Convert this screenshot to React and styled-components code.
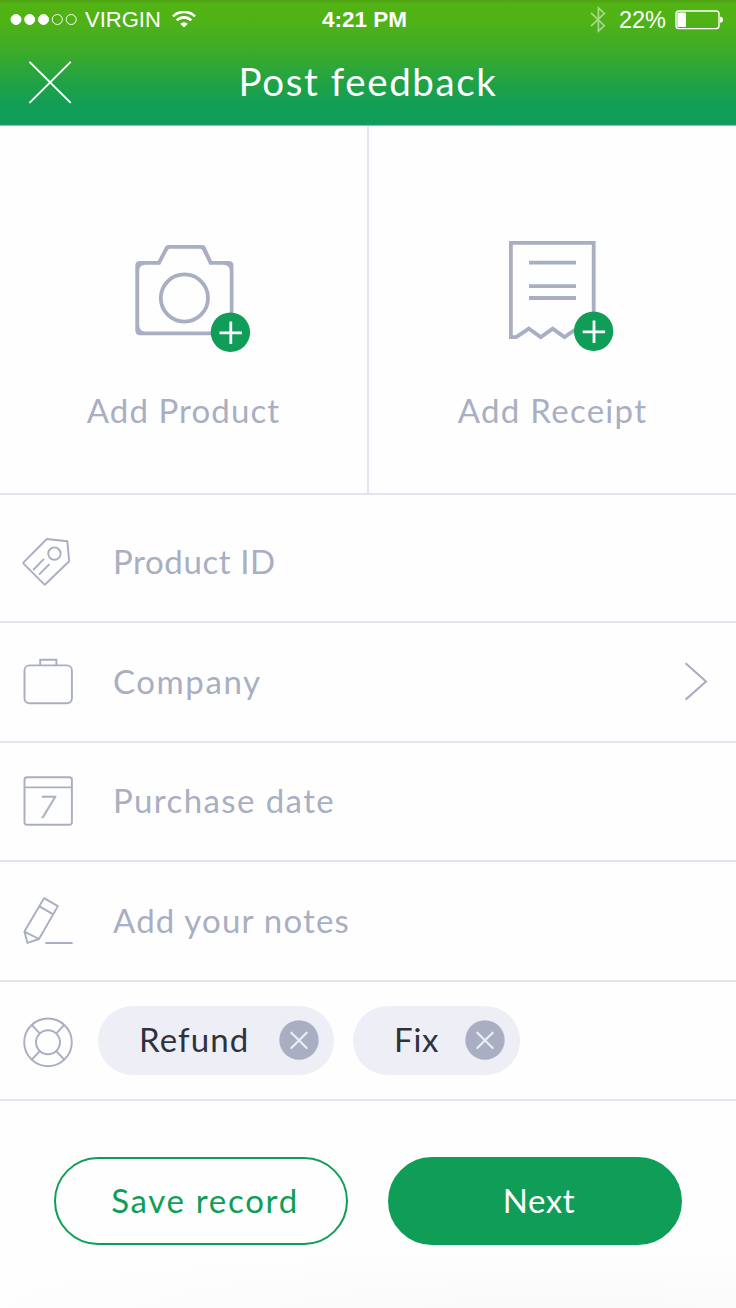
import React from "react";
import styled, { createGlobalStyle } from "styled-components";

const INK = "#a9aec2";
const GREEN = "#0f9d58";
const LINE = "#e3e5ee";

const GlobalStyle = createGlobalStyle`
  * { box-sizing: border-box; }
  body { margin: 0; background: #fff; }
  button { font: inherit; cursor: pointer; }
  svg { display: block; flex: none; }
`;

const Screen = styled.main`
  width: 736px;
  height: 1308px;
  display: flex;
  flex-direction: column;
  overflow: hidden;
  background: #fefefe;
  font-family: Lato, "Open Sans", sans-serif;
  font-size: 33px;
  line-height: 40px;
`;

const Header = styled.header`
  height: 126px;
  flex: none;
  color: #fff;
  background: linear-gradient(#4fa215 0, #52b314 4px, #50b216 20px, #3cab2a 52px, #1fa246 84px, #119f55 104px, #109c5a 125px, #86cdaa 125px);
`;

const StatusBar = styled.div`
  height: 40px;
  display: grid;
  grid-template-columns: 1fr auto 1fr;
  align-items: center;
  padding: 0 13px 0 10px;
  font: 22px/26px "Liberation Sans", Arial, sans-serif;
`;

const StatusGroup = styled.div`
  display: flex;
  align-items: center;
  justify-content: ${(p) => (p.$end ? "flex-end" : "flex-start")};
`;

const Carrier = styled.span`
  margin: 0 11px 0 8px;
`;

const Clock = styled.span`
  font-weight: 700;
  font-size: 22.5px;
  margin-right: 4px;
`;

const Percent = styled.span`
  font-size: 23.5px;
  margin: 0 9px 0 13px;
`;

const NavBar = styled.div`
  height: 86px;
  display: grid;
  grid-template-columns: 72px 1fr 72px;
  align-items: center;
  padding: 0 0 2px 0;
`;

const CloseButton = styled.button`
  border: 0;
  padding: 0 0 0 28px;
  background: none;
`;

const Title = styled.h1`
  margin: 0;
  padding-bottom: 3px;
  text-align: center;
  font-size: 38.5px;
  line-height: 46px;
  font-weight: 400;
  letter-spacing: ${(p) => p.$track}px;
`;

const Uploads = styled.section`
  height: 369px;
  flex: none;
  display: flex;
  border-bottom: 2px solid ${LINE};
`;

const UploadTile = styled.button`
  flex: 1;
  display: flex;
  flex-direction: column;
  align-items: center;
  padding: 111px 0 0;
  border: 0;
  border-right: ${(p) => (p.$divided ? `2px solid ${LINE}` : "0")};
  background: none;
  color: ${INK};
`;

const TileArt = styled.span`
  margin-left: ${(p) => p.$shift}px;
`;

const TileLabel = styled.span`
  margin-top: 35px;
  letter-spacing: ${(p) => p.$track}px;
`;

const Row = styled.div`
  height: ${(p) => p.$height}px;
  flex: none;
  display: flex;
  align-items: center;
  padding: ${(p) => p.$top || 0}px 28px 0 22px;
  border-bottom: 2px solid ${LINE};
  color: ${INK};
`;

const RowLabel = styled.span`
  flex: 1;
  margin-left: 39px;
  padding-bottom: 3px;
  letter-spacing: ${(p) => p.$track}px;
`;

const Chips = styled.div`
  display: flex;
  gap: 19px;
  margin-left: 24px;
`;

const Chip = styled.span`
  width: ${(p) => p.$width}px;
  height: 69px;
  display: flex;
  align-items: center;
  justify-content: space-between;
  padding: 0 15px 1px 41px;
  border-radius: 35px;
  background: #eeeff6;
  color: #2e323c;
  letter-spacing: ${(p) => p.$track}px;
`;

const ChipLabel = styled.span`
  padding-bottom: 3px;
`;

const ChipRemove = styled.button`
  padding: 0;
  border: 0;
  background: none;
`;

const Footer = styled.footer`
  flex: 1;
  display: flex;
  align-items: flex-start;
  justify-content: space-between;
  padding: 56px 54px 0;
  background: radial-gradient(ellipse 620px 60px at 560px 100%, #f9f9f9, #fefefe);
`;

const ActionButton = styled.button`
  width: 294px;
  height: 88px;
  padding: 0 0 3px 8px;
  border: 2px solid ${GREEN};
  border-radius: 44px;
  background: ${(p) => (p.$filled ? GREEN : "#fefefe")};
  color: ${(p) => (p.$filled ? "#fff" : GREEN)};
  letter-spacing: ${(p) => p.$track}px;
`;

const Signal = () => (
  <svg width="67" height="14" viewBox="10 12 67 14" fill="none" stroke="#fff" strokeWidth="1">
    {[16, 29.7, 43.5].map((x) => (
      <circle key={x} cx={x} cy="18.5" r="5" fill="#fff" />
    ))}
    <circle cx="57.3" cy="18.5" r="5" />
    <circle cx="71.2" cy="18.5" r="5" />
  </svg>
);

const Wifi = () => (
  <svg width="24" height="18" viewBox="172 10.8 24 18" fill="none" stroke="#fff" strokeWidth="2.7">
    <path d="M173 16.2A15.8 15.8 0 0 1 195 16.2" />
    <path d="M176.7 20.2A10.4 10.4 0 0 1 191.3 20.2" />
    <path d="M184 27.4L180.2 23.6A5.4 5.4 0 0 1 187.8 23.6Z" fill="#fff" stroke="none" />
  </svg>
);

const Bluetooth = () => (
  <svg width="16" height="28" viewBox="590 5.5 16 28" fill="none" stroke="#fff" strokeOpacity=".5" strokeWidth="1.7">
    <path d="M591 12.4L604.3 25.2L598.4 30.6V7.4L604.3 12.9L591 25.6" />
  </svg>
);

const Battery = () => (
  <svg width="48" height="20" viewBox="675 9.5 48 20" fill="#fff">
    <rect x="676" y="10.5" width="43" height="17.6" rx="2.8" fill="none" stroke="#fff" strokeWidth="1.4" />
    <rect x="677.3" y="12" width="8.7" height="14.6" rx="1" />
    <path d="M720 16.2Q723 16.4 723 19.3T720 22.4Z" />
  </svg>
);

const Cross = () => (
  <svg width="44" height="44" viewBox="28 60 44 44" stroke="#fff" strokeWidth="2" strokeLinecap="round">
    <path d="M30 62.4L70.2 102.4M70.2 62.4L30 102.4" />
  </svg>
);

const AddBadge = ({ x, y }) => (
  <>
    <circle cx={x} cy={y} r="19.7" fill={GREEN} />
    <path d={`M${x - 10.9} ${y + 0.5}h22.4M${x + 0.4} ${y - 10.8}v22.4`} stroke="#fff" strokeWidth="2.8" fill="none" />
  </>
);

const Camera = () => (
  <svg width="118" height="118" viewBox="134 237 118 118" fill="none">
    <path
      fill={INK}
      fillRule="evenodd"
      d="M140 261H157.8L164.9 247.2Q166 245 168.4 245H202.2Q204.6 245 205.7 247.2L212 261H228.5Q233.5 261 233.5 266V335.2H140.3Q135.3 335.2 135.3 330.2V266Q135.3 261 140 261ZM145.5 264.8Q139.2 264.8 139.2 271V325Q139.2 331.6 145.7 331.6H229.8V271.5Q229.8 264.8 223 264.8H209.4L202.5 250.4Q201.9 248.8 200.3 248.8H170Q168.3 248.8 167.6 250.4L160.2 264.8Z"
    />
    <circle cx="184.4" cy="298" r="23.6" stroke={INK} strokeWidth="3.8" />
    <AddBadge x={230.4} y={332.3} />
  </svg>
);

const Receipt = () => (
  <svg width="118" height="118" viewBox="500 237 118 118" fill="none">
    <path
      stroke={INK}
      strokeWidth="3.8"
      d="M593.7 331V242.8H510.9V337.1H516.2L528.8 328.6L540.8 337.1L552.7 328.6L564.5 337.1L577 328.4M529 262.7H576M529 286.2H576M529 298H576"
    />
    <AddBadge x={593.6} y={331.3} />
  </svg>
);

const LineIcon = styled.svg.attrs({ width: 52, height: 52 })`
  fill: none;
  stroke: ${INK};
  stroke-width: 1.9;
  stroke-linejoin: round;
`;

const DayNumber = styled.text`
  font: italic 300 32px Lato, sans-serif;
  fill: ${INK};
  stroke-width: 0.5;
`;

const Tag = () => (
  <LineIcon viewBox="22 536 52 52">
    <path d="M46.8 539L67.3 541.2L69.2 561.3L45.3 584.2Q44.7 584.8 44 584.2L23.8 563.9Q23 563 23.8 562.2ZM33.2 570L44 558.8M39 574.6L49.4 564.2" />
    <circle cx="54.4" cy="553.6" r="6.2" />
  </LineIcon>
);

const Briefcase = () => (
  <LineIcon viewBox="22 656 52 52">
    <rect x="24.5" y="665.4" width="47.4" height="37.9" rx="5" />
    <path d="M40.2 665V659.7H56.4V665" strokeLinejoin="miter" />
  </LineIcon>
);

const Calendar = () => (
  <LineIcon viewBox="22 776 52 52">
    <rect x="24.5" y="777.2" width="47.4" height="47.6" rx="2.5" />
    <path d="M24.5 787.4H71.9" />
    <DayNumber x="38" y="818.4">7</DayNumber>
  </LineIcon>
);

const Pencil = () => (
  <LineIcon viewBox="22 895 52 52">
    <path d="M44 898.2L57.9 906.1L39 939L27.5 942.9L24.4 931.6ZM39.4 906.4L52.4 913.8M24.4 931.6L39 939M45.4 943H72.6" />
  </LineIcon>
);

const Lifebuoy = () => (
  <LineIcon viewBox="22 1015 52 52">
    <circle cx="48" cy="1042.3" r="23.8" />
    <circle cx="48" cy="1042.3" r="12" />
    <path d="M31.8 1024.9L39.7 1033.4M64.2 1024.9L56.3 1033.4M31.8 1059.7L39.7 1051.2M64.2 1059.7L56.3 1051.2" />
  </LineIcon>
);

const Chevron = () => (
  <svg width="24" height="40" viewBox="684 662 24 40" fill="none" stroke={INK} strokeWidth="2.1">
    <path d="M685.6 663.2L706 681.5L685.6 699.6" />
  </svg>
);

const RemoveIcon = () => (
  <svg width="40" height="40" viewBox="0 0 40 40" fill="none">
    <circle cx="20" cy="20" r="19.7" fill={INK} />
    <path d="M12.3 12.7L27.7 28M27.7 12.7L12.3 28" stroke="#eeeff6" strokeWidth="2.1" strokeLinecap="round" />
  </svg>
);

const fields = [
  { label: "Product ID", icon: Tag, height: 128, top: 8, track: 0.6 },
  { label: "Company", icon: Briefcase, height: 120, track: 1.6, next: true },
  { label: "Purchase date", icon: Calendar, height: 119, track: 1.4 },
  { label: "Add your notes", icon: Pencil, height: 120, track: 1.2 },
];

const chips = [
  { label: "Refund", width: 236, track: 1.1 },
  { label: "Fix", width: 167, track: 0.8 },
];

export default function App() {
  return (
    <Screen>
      <GlobalStyle />
      <Header>
        <StatusBar>
          <StatusGroup>
            <Signal />
            <Carrier>VIRGIN</Carrier>
            <Wifi />
          </StatusGroup>
          <Clock>4:21 PM</Clock>
          <StatusGroup $end>
            <Bluetooth />
            <Percent>22%</Percent>
            <Battery />
          </StatusGroup>
        </StatusBar>
        <NavBar>
          <CloseButton aria-label="Close">
            <Cross />
          </CloseButton>
          <Title $track={1.6}>Post feedback</Title>
        </NavBar>
      </Header>

      <Uploads>
        <UploadTile $divided>
          <TileArt $shift={18}>
            <Camera />
          </TileArt>
          <TileLabel $track={1.1}>Add Product</TileLabel>
        </UploadTile>
        <UploadTile>
          <TileArt $shift={12}>
            <Receipt />
          </TileArt>
          <TileLabel $track={1.3}>Add Receipt</TileLabel>
        </UploadTile>
      </Uploads>

      {fields.map(({ label, icon: Icon, height, top, track, next }) => (
        <Row key={label} $height={height} $top={top}>
          <Icon />
          <RowLabel $track={track}>{label}</RowLabel>
          {next && <Chevron />}
        </Row>
      ))}

      <Row $height={119}>
        <Lifebuoy />
        <Chips>
          {chips.map(({ label, width, track }) => (
            <Chip key={label} $width={width} $track={track}>
              <ChipLabel>{label}</ChipLabel>
              <ChipRemove aria-label={`Remove ${label}`}>
                <RemoveIcon />
              </ChipRemove>
            </Chip>
          ))}
        </Chips>
      </Row>

      <Footer>
        <ActionButton $track={1.7}>Save record</ActionButton>
        <ActionButton $filled $track={0.6}>
          Next
        </ActionButton>
      </Footer>
    </Screen>
  );
}
